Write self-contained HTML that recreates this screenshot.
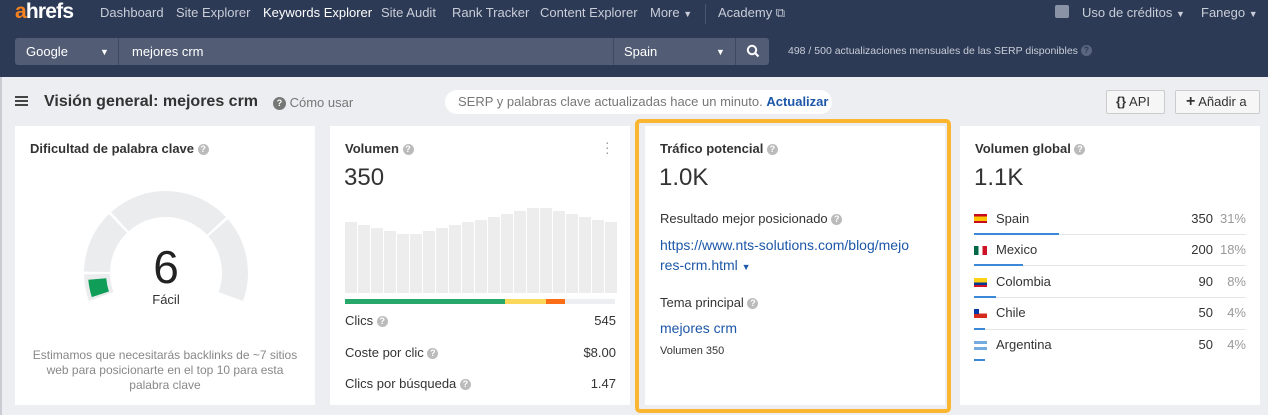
<!DOCTYPE html>
<html><head><meta charset="utf-8"><style>
*{margin:0;padding:0;box-sizing:border-box}
body{width:1268px;height:415px;overflow:hidden;background:#eceef1;font-family:"Liberation Sans",Arial,sans-serif;position:relative;color:#333}
.abs{position:absolute;white-space:nowrap}
.top{position:absolute;left:0;top:0;width:1268px;height:77px;background:#2d3a55}
.nav{font-size:13px;color:#c8cdd8;top:5px}
.q{display:inline-block;width:11px;height:11px;border-radius:50%;background:#bbb;color:#fff;font-size:9px;line-height:11px;text-align:center;font-weight:bold;vertical-align:1px}
.card{position:absolute;top:126px;width:300px;height:279px;background:#fff}
.h{font-size:13px;font-weight:bold;color:#333}
.big{font-size:24px;color:#333}
.row{font-size:13px;color:#333}
.link{color:#1c57a8}
</style></head><body>
<div class="top"></div>
<div class="abs" style="left:0;top:77px;width:2px;height:338px;background:#c9ccd3"></div>
<div class="abs" style="left:15px;top:0px;font-size:21px;font-weight:bold;color:#fff;letter-spacing:-0.8px"><span style="color:#f5821f">a</span>hrefs</div>
<div class="abs nav" style="left:100px">Dashboard</div>
<div class="abs nav" style="left:176px">Site Explorer</div>
<div class="abs nav" style="left:263px;color:#fff">Keywords Explorer</div>
<div class="abs nav" style="left:381px">Site Audit</div>
<div class="abs nav" style="left:452px">Rank Tracker</div>
<div class="abs nav" style="left:540px">Content Explorer</div>
<div class="abs nav" style="left:650px">More <span style="font-size:9px">▼</span></div>
<div class="abs" style="left:705px;top:4px;width:1px;height:20px;background:#4a5670"></div>
<div class="abs nav" style="left:718px">Academy ⧉</div>
<div class="abs" style="left:1055px;top:5px;width:14px;height:13px;background:#8a93a5;border-radius:2px"></div>
<div class="abs nav" style="left:1082px">Uso de créditos <span style="font-size:9px">▼</span></div>
<div class="abs nav" style="left:1201px">Fanego <span style="font-size:9px">▼</span></div>
<div class="abs" style="left:15px;top:38px;width:754px;height:27px;background:#525d75;border-radius:3px"></div>
<div class="abs" style="left:118px;top:38px;width:1px;height:27px;background:#3f4a62"></div>
<div class="abs" style="left:613px;top:38px;width:1px;height:27px;background:#3f4a62"></div>
<div class="abs" style="left:735px;top:38px;width:1px;height:27px;background:#3f4a62"></div>
<div class="abs" style="left:26px;top:44px;font-size:13px;color:#fff">Google</div>
<div class="abs" style="left:100px;top:47px;font-size:9px;color:#fff">▼</div>
<div class="abs" style="left:132px;top:44px;font-size:13px;color:#fff">mejores crm</div>
<div class="abs" style="left:624px;top:44px;font-size:13px;color:#fff">Spain</div>
<div class="abs" style="left:716px;top:47px;font-size:9px;color:#fff">▼</div>
<svg class="abs" style="left:746px;top:44px" width="14" height="14"><circle cx="6" cy="6" r="4.2" fill="none" stroke="#fff" stroke-width="2"/><line x1="9" y1="9" x2="12.5" y2="12.5" stroke="#fff" stroke-width="2"/></svg>
<div class="abs" style="left:788px;top:45px;font-size:10.5px;color:#c8cdd8">498 / 500 actualizaciones mensuales de las SERP disponibles <span class="q" style="background:#5a6680;color:#2d3a55">?</span></div>

<div class="abs" style="left:15px;top:96px;height:2px;background:#444;box-shadow:0 4px 0 #444,0 8px 0 #444;width:13px"></div>
<div class="abs" style="left:44px;top:93px;font-size:16px;font-weight:bold;color:#333">Visión general: mejores crm</div>
<div class="abs" style="left:273px;top:95px;font-size:13px;color:#777"><span class="q" style="width:13px;height:13px;line-height:13px;background:#777">?</span> Cómo usar</div>
<div class="abs" style="left:445px;top:90px;width:387px;height:24px;background:#fff;border-radius:12px"></div>
<div class="abs" style="left:458px;top:94px;font-size:13px;color:#777">SERP y palabras clave actualizadas hace un minuto. <b style="color:#1c57a8">Actualizar</b></div>
<div class="abs" style="left:1106px;top:90px;width:59px;height:24px;border:1px solid #ccc;border-radius:2px;background:#f6f6f6;font-size:13px;padding:3px 0 0 9px"><b>{}</b> API</div>
<div class="abs" style="left:1175px;top:90px;width:85px;height:24px;border:1px solid #ccc;border-radius:2px;background:#f6f6f6;font-size:13px;padding:3px 0 0 10px"><b style="font-size:16px;line-height:14px">+</b> Añadir a</div>

<div class="card" style="left:15px"></div>
<div class="abs h" style="left:30px;top:141px">Dificultad de palabra clave <span class="q">?</span></div>
<svg class="abs" style="left:0;top:0" width="330" height="415">
<g fill="#ebecee">
<path d="M88.95 301.04 A82 82 0 0 1 84.02 274.43 L110.01 273.98 A56 56 0 0 0 113.38 292.15Z"/>
<path d="M84.02 271.57 A82 82 0 0 1 109.04 214.02 L127.10 232.72 A56 56 0 0 0 110.01 272.02Z"/>
<path d="M111.13 212.07 A82 82 0 0 1 225.97 217.08 L206.96 234.81 A56 56 0 0 0 128.53 231.39Z"/>
<path d="M227.89 219.20 A82 82 0 0 1 243.05 301.04 L218.62 292.15 A56 56 0 0 0 208.26 236.26Z"/>
</g>
<path d="M91.81 297.10 A78 78 0 0 1 88.30 279.80 L106.23 278.23 A60 60 0 0 0 108.93 291.54Z" fill="#0f9d58"/>
</svg>
<div class="abs" style="left:126px;top:240px;width:80px;text-align:center;font-size:46px;color:#222">6</div>
<div class="abs" style="left:126px;top:292px;width:80px;text-align:center;font-size:13px;color:#333">Fácil</div>
<div class="abs" style="left:30px;top:348px;width:270px;text-align:center;white-space:normal;font-size:12px;line-height:15px;color:#888">Estimamos que necesitarás backlinks de ~7 sitios web para posicionarte en el top 10 para esta palabra clave</div>

<div class="card" style="left:330px"></div>
<div class="abs h" style="left:345px;top:141px">Volumen <span class="q">?</span></div>
<div class="abs" style="left:605px;top:140px;font-size:14px;color:#999;line-height:5px">·<br>·<br>·</div>
<div class="abs big" style="left:344px;top:164px">350</div>
<svg class="abs" style="left:345px;top:200px" width="272" height="93">
<g fill="#ededed">
<rect x="0" y="22" width="12" height="71"/><rect x="13" y="25" width="12" height="68"/><rect x="26" y="28" width="12" height="65"/><rect x="39" y="31" width="12" height="62"/><rect x="52" y="34" width="12" height="59"/><rect x="65" y="34" width="12" height="59"/><rect x="78" y="31" width="12" height="62"/><rect x="91" y="28" width="12" height="65"/><rect x="104" y="25" width="12" height="68"/><rect x="117" y="22" width="12" height="71"/><rect x="130" y="20" width="12" height="73"/><rect x="143" y="17" width="12" height="76"/><rect x="156" y="14" width="12" height="79"/><rect x="169" y="11" width="12" height="82"/><rect x="182" y="8" width="12" height="85"/><rect x="195" y="8" width="12" height="85"/><rect x="208" y="11" width="12" height="82"/><rect x="221" y="14" width="12" height="79"/><rect x="234" y="17" width="12" height="76"/><rect x="247" y="20" width="12" height="73"/><rect x="260" y="22" width="12" height="71"/>
</g></svg>
<div class="abs" style="left:345px;top:299px;width:270px;height:5px;background:#eceef1"></div>
<div class="abs" style="left:345px;top:299px;width:160px;height:5px;background:#27a86a"></div>
<div class="abs" style="left:505px;top:299px;width:41px;height:5px;background:#fbd75b"></div>
<div class="abs" style="left:546px;top:299px;width:19px;height:5px;background:#fb6d17"></div>
<div class="abs row" style="left:345px;top:313px">Clics <span class="q">?</span></div><div class="abs row" style="left:560px;top:313px;width:56px;text-align:right">545</div>
<div class="abs row" style="left:345px;top:345px">Coste por clic <span class="q">?</span></div><div class="abs row" style="left:560px;top:345px;width:56px;text-align:right">$8.00</div>
<div class="abs row" style="left:345px;top:376px">Clics por búsqueda <span class="q">?</span></div><div class="abs row" style="left:560px;top:376px;width:56px;text-align:right">1.47</div>

<div class="card" style="left:645px"></div>
<div class="abs" style="left:635px;top:119px;width:316px;height:294px;border:4px solid #fbb631;border-radius:5px"></div>
<div class="abs h" style="left:660px;top:141px">Tráfico potencial <span class="q">?</span></div>
<div class="abs big" style="left:659px;top:164px">1.0K</div>
<div class="abs row" style="left:660px;top:211px">Resultado mejor posicionado <span class="q">?</span></div>
<div class="abs row link" style="left:660px;top:235px;font-size:14px;line-height:20px">https://www.nts-solutions.com/blog/mejo<br>res-crm.html <span style="font-size:9px">▼</span></div>
<div class="abs row" style="left:660px;top:295px">Tema principal <span class="q">?</span></div>
<div class="abs row link" style="left:660px;top:320px;font-size:14px">mejores crm</div>
<div class="abs" style="left:660px;top:345px;font-size:11px;color:#333">Volumen 350</div>

<div class="card" style="left:960px"></div>
<div class="abs h" style="left:975px;top:141px">Volumen global <span class="q">?</span></div>
<div class="abs big" style="left:974px;top:164px">1.1K</div>
<div class="abs" style="left:974px;top:214px;width:13px;height:9px;background:linear-gradient(#c60b1e 25%,#ffc400 25%,#ffc400 75%,#c60b1e 75%)"></div>
<div class="abs" style="left:974px;top:246px;width:13px;height:9px;background:linear-gradient(90deg,#006847 33%,#fff 33%,#fff 66%,#ce1126 66%)"></div>
<div class="abs" style="left:974px;top:278px;width:13px;height:9px;background:linear-gradient(#fcd116 50%,#003893 50%,#003893 75%,#ce1126 75%)"></div>
<div class="abs" style="left:974px;top:309px;width:13px;height:9px;background:linear-gradient(#fff 50%,#d52b1e 50%)"><div style="width:5px;height:5px;background:#0039a6"></div></div>
<div class="abs" style="left:974px;top:341px;width:13px;height:9px;background:linear-gradient(#74acdf 33%,#fff 33%,#fff 66%,#74acdf 66%)"></div>
<div class="abs row" style="left:996px;top:211px">Spain</div><div class="abs row" style="left:1180px;top:211px;width:33px;text-align:right">350</div><div class="abs row" style="left:1216px;top:211px;width:30px;text-align:right;color:#999">31%</div>
<div class="abs row" style="left:996px;top:242px">Mexico</div><div class="abs row" style="left:1180px;top:242px;width:33px;text-align:right">200</div><div class="abs row" style="left:1216px;top:242px;width:30px;text-align:right;color:#999">18%</div>
<div class="abs row" style="left:996px;top:274px">Colombia</div><div class="abs row" style="left:1180px;top:274px;width:33px;text-align:right">90</div><div class="abs row" style="left:1216px;top:274px;width:30px;text-align:right;color:#999">8%</div>
<div class="abs row" style="left:996px;top:305px">Chile</div><div class="abs row" style="left:1180px;top:305px;width:33px;text-align:right">50</div><div class="abs row" style="left:1216px;top:305px;width:30px;text-align:right;color:#999">4%</div>
<div class="abs row" style="left:996px;top:337px">Argentina</div><div class="abs row" style="left:1180px;top:337px;width:33px;text-align:right">50</div><div class="abs row" style="left:1216px;top:337px;width:30px;text-align:right;color:#999">4%</div>
<div class="abs" style="left:974px;top:234px;width:272px;height:1px;background:#e6e6e6"></div>
<div class="abs" style="left:974px;top:265px;width:272px;height:1px;background:#e6e6e6"></div>
<div class="abs" style="left:974px;top:297px;width:272px;height:1px;background:#e6e6e6"></div>
<div class="abs" style="left:974px;top:329px;width:272px;height:1px;background:#e6e6e6"></div>
<div class="abs" style="left:974px;top:233px;width:85px;height:2px;background:#3b87d8"></div>
<div class="abs" style="left:974px;top:264px;width:49px;height:2px;background:#3b87d8"></div>
<div class="abs" style="left:974px;top:296px;width:22px;height:2px;background:#3b87d8"></div>
<div class="abs" style="left:974px;top:328px;width:11px;height:2px;background:#3b87d8"></div>
<div class="abs" style="left:974px;top:359px;width:11px;height:2px;background:#3b87d8"></div>
</body></html>
